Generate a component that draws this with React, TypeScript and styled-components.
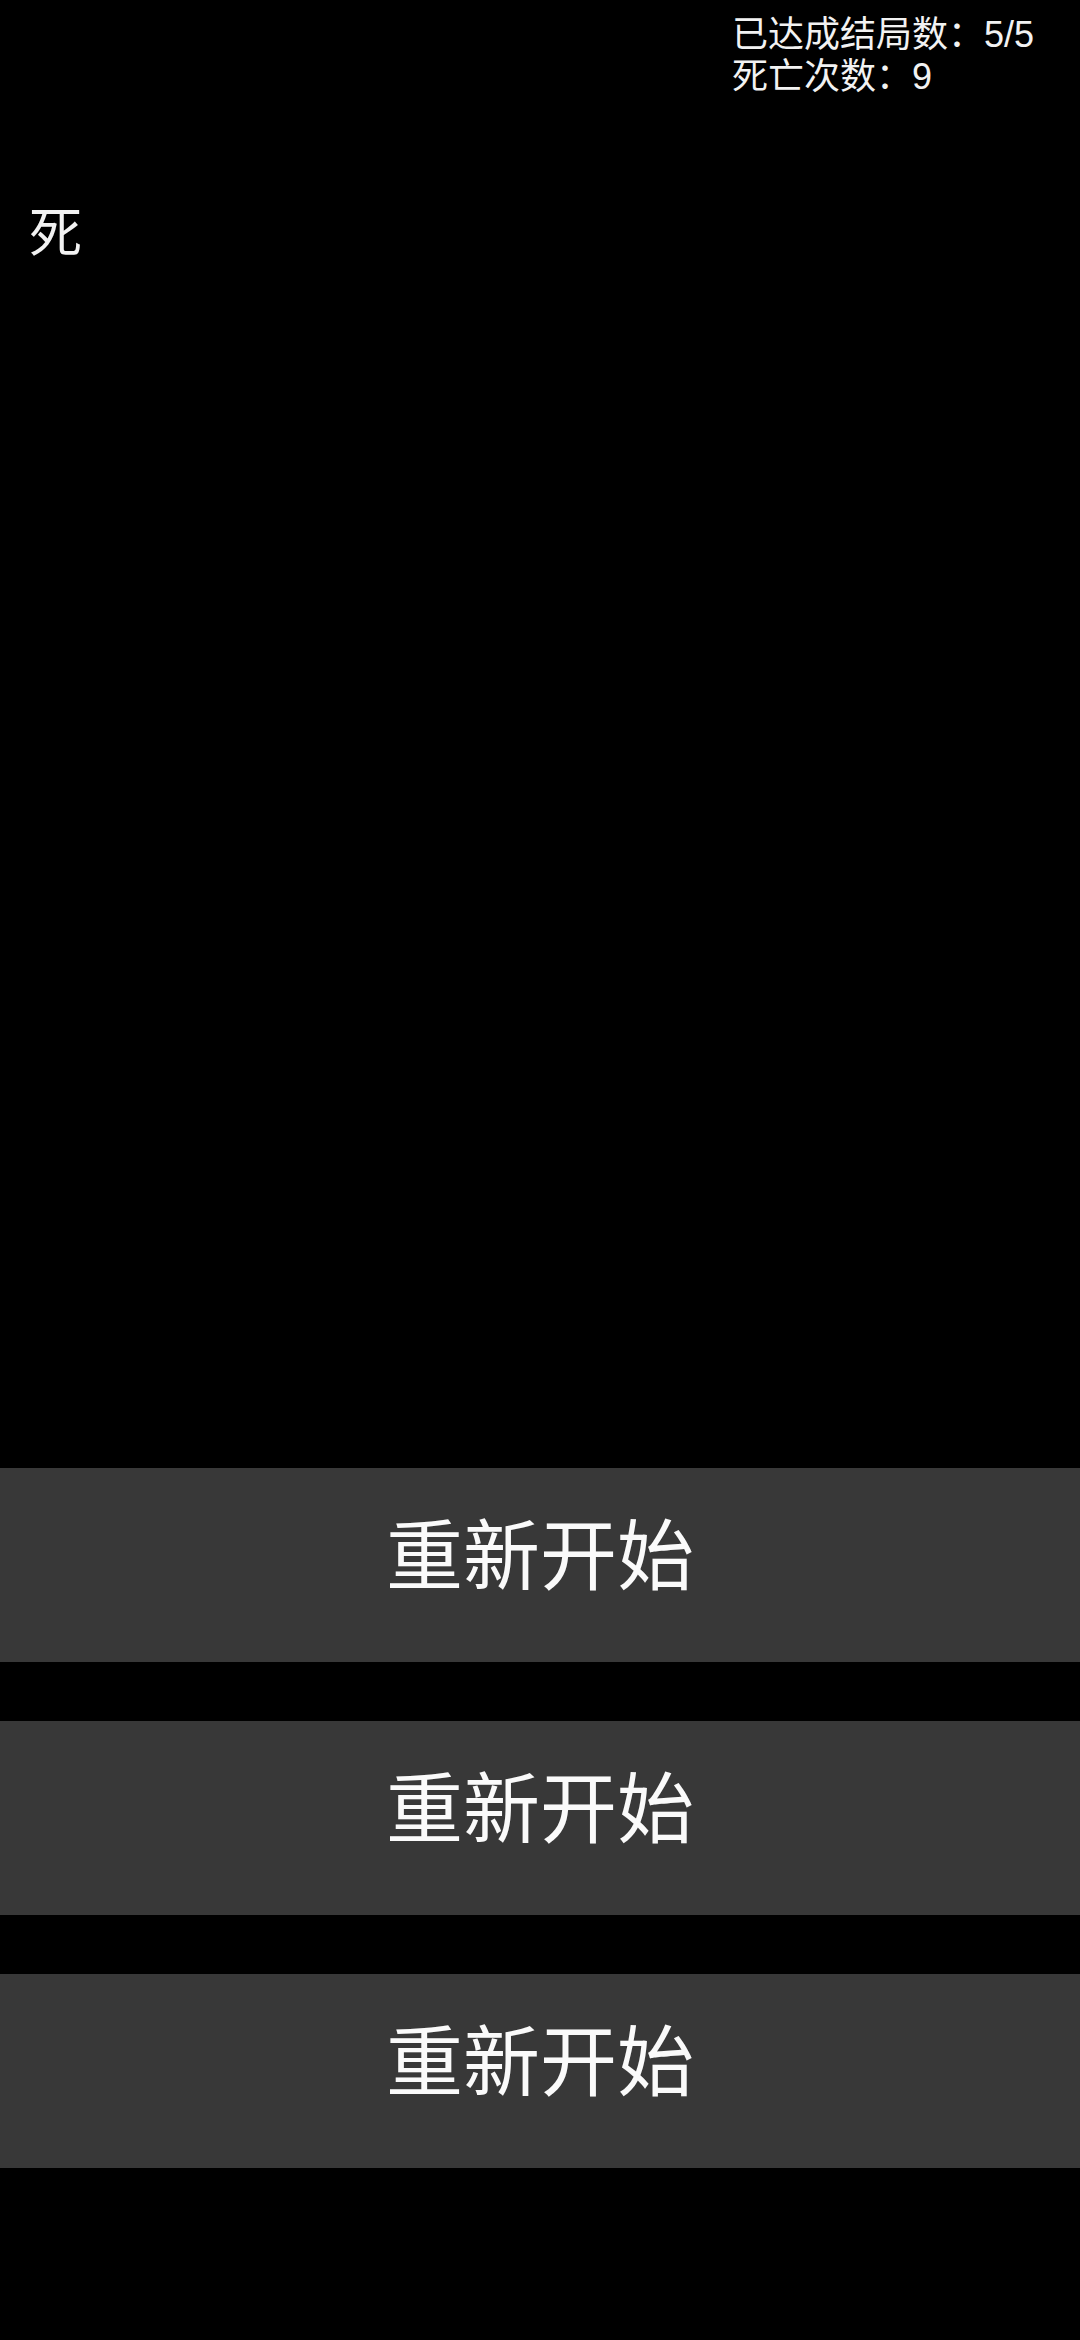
import styled, { createGlobalStyle } from "styled-components";

const GlobalStyle = createGlobalStyle`
  html, body {
    margin: 0;
    padding: 0;
    background: #000;
  }
`;

const Page = styled.div`
  width: 1080px;
  height: 2340px;
  display: flex;
  flex-direction: column;
  background: #000;
  color: #f2f2f2;
  font-family: "Liberation Sans", "Noto Sans CJK SC", sans-serif;
`;

const Hud = styled.div`
  display: flex;
  justify-content: flex-end;
  padding: 14px 46px 0 0;
`;

const Stats = styled.div`
  font-size: 36px;
  line-height: 42px;
`;

const Story = styled.div`
  flex: 1;
  padding: 104px 29px 0;
  font-size: 53px;
  line-height: 64px;
`;

const Choices = styled.div`
  display: flex;
  flex-direction: column;
  gap: 59px;
  padding-bottom: 172px;
`;

const ChoiceButton = styled.button`
  height: 194px;
  border: none;
  background: #383838;
  color: #fafafa;
  font-family: inherit;
  font-size: 77px;
  padding: 0 0 30px;
  cursor: pointer;
`;

const choices = ["重新开始", "重新开始", "重新开始"];

const App = () => {
  return (
    <Page>
      <GlobalStyle />
      <Hud>
        <Stats>
          <div>已达成结局数：5/5</div>
          <div>死亡次数：9</div>
        </Stats>
      </Hud>
      <Story>死</Story>
      <Choices>
        {choices.map((label, i) => (
          <ChoiceButton key={i}>{label}</ChoiceButton>
        ))}
      </Choices>
    </Page>
  );
};

export default App;
